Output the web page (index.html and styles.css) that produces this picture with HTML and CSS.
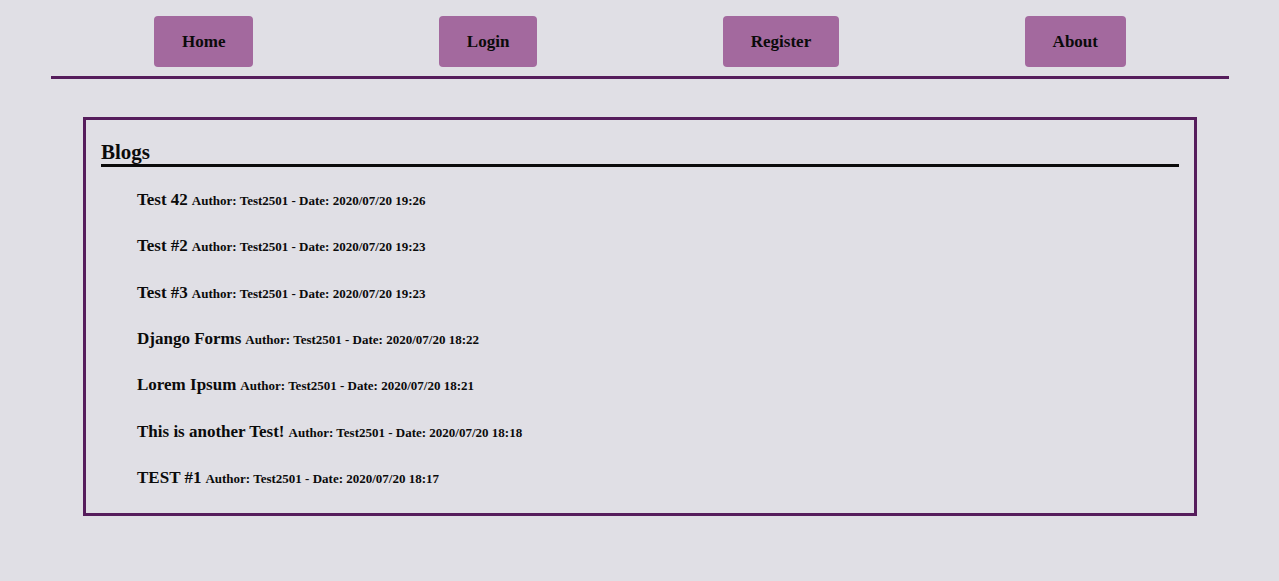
FILE: index.html
```html
<!DOCTYPE html>
<html lang="en">
<head>
<meta charset="utf-8">
<title>Blogs</title>
<link rel="stylesheet" href="styles.css">
</head>
<body>
<nav class="topnav">
  <a class="navbtn" href="#">Home</a>
  <a class="navbtn" href="#">Login</a>
  <a class="navbtn" href="#">Register</a>
  <a class="navbtn" href="#">About</a>
</nav>
<main class="blogbox">
  <h2 class="blogs-title">Blogs</h2>
  <ul class="bloglist">
    <li><span class="btitle">Test 42</span> <span class="bmeta">Author: Test2501 - Date: 2020/07/20 19:26</span></li>
    <li><span class="btitle">Test #2</span> <span class="bmeta">Author: Test2501 - Date: 2020/07/20 19:23</span></li>
    <li><span class="btitle">Test #3</span> <span class="bmeta">Author: Test2501 - Date: 2020/07/20 19:23</span></li>
    <li><span class="btitle">Django Forms</span> <span class="bmeta">Author: Test2501 - Date: 2020/07/20 18:22</span></li>
    <li><span class="btitle">Lorem Ipsum</span> <span class="bmeta">Author: Test2501 - Date: 2020/07/20 18:21</span></li>
    <li><span class="btitle">This is another Test!</span> <span class="bmeta">Author: Test2501 - Date: 2020/07/20 18:18</span></li>
    <li><span class="btitle">TEST #1</span> <span class="bmeta">Author: Test2501 - Date: 2020/07/20 18:17</span></li>
  </ul>
</main>
</body>
</html>
```
FILE: styles.css
```css
html, body {
  margin: 0;
  padding: 0;
}
body {
  background: #e0dfe5;
  color: #0b0b0b;
  font-family: "Liberation Serif", "Times New Roman", serif;
  font-weight: bold;
}
.topnav {
  display: flex;
  justify-content: space-between;
  margin: 0 50px 0 51px;
  padding: 16px 103px 9px 103px;
  border-bottom: 3px solid #561d5c;
}
.navbtn {
  display: flex;
  align-items: center;
  justify-content: center;
  height: 51px;
  padding: 0 28px;
  background: #a3699e;
  border-radius: 4px;
  color: #0b0b0b;
  text-decoration: none;
  font-size: 17px;
  box-sizing: border-box;
}
.blogbox {
  display: block;
  margin: 38px 82px 0 83px;
  border: 3px solid #561d5c;
  padding: 20px 15px 0 15px;
}
.blogs-title {
  margin: 0;
  font-size: 21px;
  line-height: 24px;
  border-bottom: 3px solid #0b0b0b;
}
.bloglist {
  list-style: none;
  margin: 10px 0 0 0;
  padding: 0 0 12px 36px;
}
.bloglist li {
  height: 20px;
  line-height: 20px;
  padding: 13.165px 0;
  white-space: nowrap;
}
.btitle {
  font-size: 17px;
}
.bmeta {
  font-size: 13px;
}
```
